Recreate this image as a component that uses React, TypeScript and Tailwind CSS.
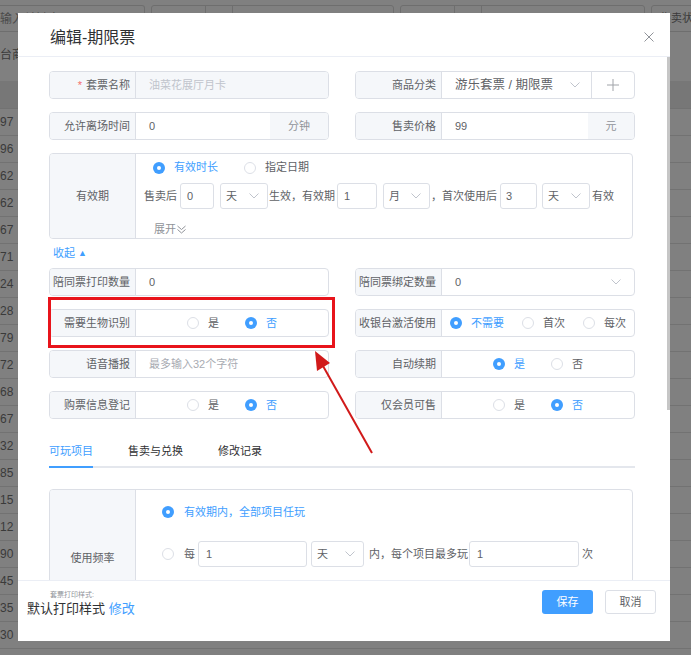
import React from "react";

const nums = ["97", "96", "62", "62", "67", "71", "24", "28", "79", "72", "68", "67", "32", "85", "15", "12", "90", "45", "35", "30"];

function Chevron() {
  return (
    <svg width="10" height="6" viewBox="0 0 10 6" fill="none" className="shrink-0">
      <path d="M0.5 0.5L5 5L9.5 0.5" stroke="#c0c4cc" strokeWidth="1" />
    </svg>
  );
}

function Radio({ checked = false, label }: { checked?: boolean; label: string }) {
  return (
    <span className="flex shrink-0 items-center gap-[9px] whitespace-nowrap">
      {checked ? (
        <span className="flex h-[12px] w-[12px] items-center justify-center rounded-full bg-[#409eff]">
          <span className="h-[4px] w-[4px] rounded-full bg-white" />
        </span>
      ) : (
        <span className="h-[12px] w-[12px] rounded-full border border-[#dcdfe6] bg-white" />
      )}
      <span className={checked ? "text-[#409eff]" : "text-[#606266]"}>{label}</span>
    </span>
  );
}

function Field({
  label,
  required,
  children,
}: {
  label: string;
  required?: boolean;
  children: React.ReactNode;
}) {
  return (
    <div className="flex h-[28px] w-[280px] overflow-hidden rounded-[4px] border border-[#dcdfe6] text-[11px]">
      <div className="flex w-[86px] shrink-0 items-center justify-end whitespace-nowrap border-r border-[#dcdfe6] bg-[#f5f7fa] pr-[5px] text-[#606266]">
        {required && <span className="mr-[4px] text-[#f56c6c]">*</span>}
        {label}
      </div>
      <div className="flex min-w-0 flex-1 items-center text-[#606266]">{children}</div>
    </div>
  );
}

function MiniSelect({ value, className }: { value: string; className: string }) {
  return (
    <div
      className={`flex h-[26px] shrink-0 items-center justify-between rounded-[3px] border border-[#dcdfe6] pl-[5px] pr-[8px] ${className}`}
    >
      <span>{value}</span>
      <Chevron />
    </div>
  );
}

function Backdrop() {
  return (
    <div className="flex flex-col text-[12px] text-[#3a3a3a]">
      <div className="flex h-[37px] items-start gap-[6px] pt-[5px]">
        <div className="flex h-[27px] w-[145px] shrink-0 items-center rounded-r-[3px] border-y border-r border-[#6e6e6e] text-[#4a4a4a]">
          输入关键字
        </div>
        <div className="flex h-[27px] w-[243px] shrink-0 rounded-[3px] border border-[#6e6e6e]">
          <div className="w-[54px] border-r border-[#6e6e6e]" />
          <div className="w-[27px] border-r border-[#6e6e6e]" />
        </div>
        <div className="flex h-[27px] w-[245px] shrink-0 rounded-[3px] border border-[#6e6e6e]">
          <div className="w-[54px] border-r border-[#6e6e6e]" />
          <div className="w-[27px] border-r border-[#6e6e6e]" />
        </div>
        <div className="flex h-[27px] w-[60px] shrink-0 items-center whitespace-nowrap rounded-[3px] border border-[#6e6e6e] pl-[8px] text-[11px]">
          售卖状态
        </div>
      </div>
      <div className="flex h-[44px] items-center pb-[8px]">台商品</div>
      <div className="h-[28px] border-b border-[#727272] bg-[#777777]" />
      {nums.map((n, i) => (
        <div key={i} className="flex h-[27px] items-center border-b border-[#727272]">
          {n}
        </div>
      ))}
    </div>
  );
}

export default function App() {
  return (
    <div className="relative h-[655px] w-[691px] overflow-hidden bg-[#808080] font-['Liberation_Sans','Noto_Sans_CJK_SC',sans-serif]">
      <Backdrop />

      {/* dialog */}
      <div className="absolute left-[18px] top-[13px] flex h-[628px] w-[652px] flex-col bg-white">
        <div className="flex h-[44px] shrink-0 items-start justify-between border-b border-[#ebeef5] pl-[32px] pr-[16px]">
          <span className="pt-[15px] text-[16px] leading-[20px] text-[#303133]">编辑-期限票</span>
          <svg width="10" height="10" viewBox="0 0 10 10" className="mt-[19px]">
            <path d="M0.5 0.5L9.5 9.5M9.5 0.5L0.5 9.5" stroke="#909399" strokeWidth="1" />
          </svg>
        </div>

        <div className="relative min-h-0 flex-1 overflow-hidden pl-[31px] pt-[14px] text-[11px] text-[#606266]">
          <div className="flex flex-col gap-[13px]">
            <div className="flex gap-[26px]">
              <Field label="套票名称" required>
                <div className="flex h-full flex-1 items-center bg-[#f5f7fa] pl-[13px] text-[#c0c4cc]">油菜花展厅月卡</div>
              </Field>
              <Field label="商品分类">
                <div className="flex h-full flex-1 items-center justify-between pl-[13px] pr-[11px] text-[12.5px]">
                  <span>游乐套票 / 期限票</span>
                  <Chevron />
                </div>
                <div className="flex h-full w-[43px] shrink-0 items-center justify-center border-l border-[#dcdfe6]">
                  <svg width="12" height="12" viewBox="0 0 12 12">
                    <path d="M6 0V12M0 6H12" stroke="#a0a3a8" strokeWidth="1" />
                  </svg>
                </div>
              </Field>
            </div>

            <div className="flex gap-[26px]">
              <Field label="允许离场时间">
                <span className="flex-1 pl-[13px]">0</span>
                <div className="flex h-full w-[58px] shrink-0 items-center justify-center bg-[#f5f7fa] text-[#909399]">分钟</div>
              </Field>
              <Field label="售卖价格">
                <span className="flex-1 pl-[13px]">99</span>
                <div className="flex h-full w-[46px] shrink-0 items-center justify-center bg-[#f5f7fa] text-[#909399]">元</div>
              </Field>
            </div>

            <div className="flex h-[86px] w-[584px] overflow-hidden rounded-[4px] border border-[#dcdfe6]">
              <div className="flex w-[86px] shrink-0 items-center justify-center border-r border-[#dcdfe6] bg-[#f5f7fa]">有效期</div>
              <div className="flex flex-1 flex-col whitespace-nowrap">
                <div className="flex h-[27px] items-center gap-[26px] pl-[17px]">
                  <Radio checked label="有效时长" />
                  <Radio label="指定日期" />
                </div>
                <div className="mt-[2px] flex h-[26px] items-center pl-[8px]">
                  <span className="shrink-0">售卖后</span>
                  <div className="ml-[3px] flex h-[26px] w-[34px] shrink-0 items-center rounded-[3px] border border-[#dcdfe6] pl-[6px]">0</div>
                  <MiniSelect value="天" className="ml-[6px] w-[48px]" />
                  <span className="ml-[1px] shrink-0">生效，有效期</span>
                  <div className="ml-[2px] flex h-[26px] w-[40px] shrink-0 items-center rounded-[3px] border border-[#dcdfe6] pl-[6px]">1</div>
                  <MiniSelect value="月" className="ml-[6px] w-[47px]" />
                  <span className="ml-[1px] shrink-0">，首次使用后</span>
                  <div className="ml-[3px] flex h-[26px] w-[37px] shrink-0 items-center rounded-[3px] border border-[#dcdfe6] pl-[5px]">3</div>
                  <MiniSelect value="天" className="ml-[5px] w-[48px]" />
                  <span className="ml-[2px] shrink-0">有效</span>
                </div>
                <div className="mt-[13px] flex h-[14px] items-center gap-[1px] pl-[18px] text-[#909399]">
                  <span>展开</span>
                  <svg width="9" height="9" viewBox="0 0 9 9" fill="none">
                    <path d="M0.5 1L4.5 4.5L8.5 1M0.5 4.5L4.5 8L8.5 4.5" stroke="#909399" strokeWidth="1" />
                  </svg>
                </div>
              </div>
            </div>
          </div>

          <div className="flex h-[29px] items-center gap-[3px] pl-[4px] text-[#409eff]">
            <span>收起</span>
            <span className="text-[9px]">▲</span>
          </div>

          <div className="flex flex-col gap-[13px]">
            <div className="flex gap-[26px]">
              <Field label="陪同票打印数量">
                <span className="pl-[13px]">0</span>
              </Field>
              <Field label="陪同票绑定数量">
                <div className="flex flex-1 items-center justify-between pl-[13px] pr-[13px]">
                  <span>0</span>
                  <Chevron />
                </div>
              </Field>
            </div>
            <div className="flex gap-[26px]">
              <Field label="需要生物识别">
                <div className="flex flex-1 justify-center gap-[26px]">
                  <Radio label="是" />
                  <Radio checked label="否" />
                </div>
              </Field>
              <Field label="收银台激活使用">
                <div className="flex flex-1 justify-center gap-[18px]">
                  <Radio checked label="不需要" />
                  <Radio label="首次" />
                  <Radio label="每次" />
                </div>
              </Field>
            </div>
            <div className="flex gap-[26px]">
              <Field label="语音播报">
                <span className="pl-[13px] text-[#a8abb2]">最多输入32个字符</span>
              </Field>
              <Field label="自动续期">
                <div className="flex flex-1 justify-center gap-[26px]">
                  <Radio checked label="是" />
                  <Radio label="否" />
                </div>
              </Field>
            </div>
            <div className="flex gap-[26px]">
              <Field label="购票信息登记">
                <div className="flex flex-1 justify-center gap-[26px]">
                  <Radio label="是" />
                  <Radio checked label="否" />
                </div>
              </Field>
              <Field label="仅会员可售">
                <div className="flex flex-1 justify-center gap-[26px]">
                  <Radio label="是" />
                  <Radio checked label="否" />
                </div>
              </Field>
            </div>
          </div>

          <div className="mt-[15px] flex w-[586px] gap-[35px] border-b-2 border-[#e4e7ed]">
            <div className="-mb-[2px] flex h-[34px] items-center border-b-2 border-[#409eff] pt-[2px] text-[#409eff]">可玩项目</div>
            <div className="flex h-[32px] items-center pt-[2px] text-[#303133]">售卖与兑换</div>
            <div className="flex h-[32px] items-center pt-[2px] text-[#303133]">修改记录</div>
          </div>

          <div className="mt-[21px] flex h-[138px] w-[584px] overflow-hidden rounded-[4px] border border-[#dcdfe6]">
            <div className="flex w-[86px] shrink-0 items-center justify-center border-r border-[#dcdfe6] bg-[#f5f7fa]">使用频率</div>
            <div className="flex flex-1 flex-col whitespace-nowrap">
              <div className="flex h-[44px] items-center pl-[26px]">
                <span className="flex items-center gap-[10px]">
                  <span className="flex h-[12px] w-[12px] items-center justify-center rounded-full bg-[#409eff]">
                    <span className="h-[4px] w-[4px] rounded-full bg-white" />
                  </span>
                  <span className="text-[#409eff]">有效期内，全部项目任玩</span>
                </span>
              </div>
              <div className="mt-[7px] flex h-[26px] items-center pl-[26px]">
                <span className="h-[12px] w-[12px] shrink-0 rounded-full border border-[#dcdfe6]" />
                <span className="ml-[10px] shrink-0">每</span>
                <div className="ml-[3px] flex h-[26px] w-[109px] shrink-0 items-center rounded-[3px] border border-[#dcdfe6] pl-[7px]">1</div>
                <MiniSelect value="天" className="ml-[4px] w-[53px]" />
                <span className="ml-[5px] shrink-0">内，每个项目最多玩</span>
                <div className="ml-[1px] flex h-[26px] w-[110px] shrink-0 items-center rounded-[3px] border border-[#dcdfe6] pl-[7px]">1</div>
                <span className="ml-[3px] shrink-0">次</span>
              </div>
            </div>
          </div>

          <div className="absolute right-0 top-0 h-[353px] w-[3px] bg-[#c6c6c6]" />
        </div>

        <div className="flex h-[61px] shrink-0 items-start justify-between border-t border-[#ebeef5]">
          <div className="flex flex-col pl-[9px] pt-[9px]">
            <span className="pl-[23px] text-[7px] leading-[10px] text-[#909399]">套票打印样式:</span>
            <span className="whitespace-nowrap text-[13px] leading-[18px] text-[#303133]">
              默认打印样式 <span className="text-[#409eff]">修改</span>
            </span>
          </div>
          <div className="flex gap-[12px] pr-[14px] pt-[9px] text-[11px]">
            <button type="button" className="flex h-[24px] w-[51px] items-center justify-center rounded-[3px] bg-[#409eff] text-white">
              保存
            </button>
            <button type="button" className="flex h-[24px] w-[51px] items-center justify-center rounded-[3px] border border-[#dcdfe6] bg-white text-[#606266]">
              取消
            </button>
          </div>
        </div>
      </div>

      {/* annotation */}
      <div className="pointer-events-none absolute left-[48px] top-[297px] h-[51px] w-[287px] border-[3px] border-[#e8141b]" />
      <svg className="pointer-events-none absolute left-0 top-0" width="691" height="655">
        <line x1="372" y1="453" x2="323" y2="366" stroke="#d11a1a" strokeWidth="2" />
        <polygon points="315,351 330,363 317,371" fill="#d11a1a" />
      </svg>
    </div>
  );
}
